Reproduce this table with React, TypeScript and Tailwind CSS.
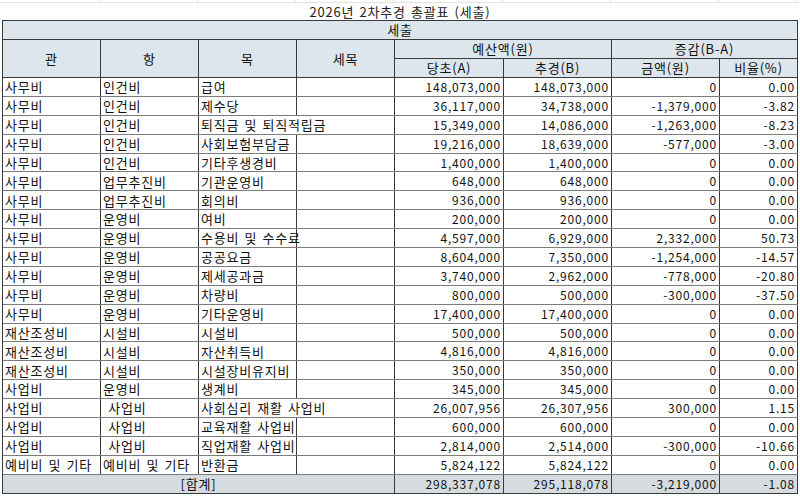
const rows: [string, string, string, string, string, string, string][] = [
  ['사무비', '인건비', '급여', '148,073,000', '148,073,000', '0', '0.00'],
  ['사무비', '인건비', '제수당', '36,117,000', '34,738,000', '-1,379,000', '-3.82'],
  ['사무비', '인건비', '퇴직금 및 퇴직적립금', '15,349,000', '14,086,000', '-1,263,000', '-8.23'],
  ['사무비', '인건비', '사회보험부담금', '19,216,000', '18,639,000', '-577,000', '-3.00'],
  ['사무비', '인건비', '기타후생경비', '1,400,000', '1,400,000', '0', '0.00'],
  ['사무비', '업무추진비', '기관운영비', '648,000', '648,000', '0', '0.00'],
  ['사무비', '업무추진비', '회의비', '936,000', '936,000', '0', '0.00'],
  ['사무비', '운영비', '여비', '200,000', '200,000', '0', '0.00'],
  ['사무비', '운영비', '수용비 및 수수료', '4,597,000', '6,929,000', '2,332,000', '50.73'],
  ['사무비', '운영비', '공공요금', '8,604,000', '7,350,000', '-1,254,000', '-14.57'],
  ['사무비', '운영비', '제세공과금', '3,740,000', '2,962,000', '-778,000', '-20.80'],
  ['사무비', '운영비', '차량비', '800,000', '500,000', '-300,000', '-37.50'],
  ['사무비', '운영비', '기타운영비', '17,400,000', '17,400,000', '0', '0.00'],
  ['재산조성비', '시설비', '시설비', '500,000', '500,000', '0', '0.00'],
  ['재산조성비', '시설비', '자산취득비', '4,816,000', '4,816,000', '0', '0.00'],
  ['재산조성비', '시설비', '시설장비유지비', '350,000', '350,000', '0', '0.00'],
  ['사업비', '운영비', '생계비', '345,000', '345,000', '0', '0.00'],
  ['사업비', ' 사업비', '사회심리 재활 사업비', '26,007,956', '26,307,956', '300,000', '1.15'],
  ['사업비', ' 사업비', '교육재활 사업비', '600,000', '600,000', '0', '0.00'],
  ['사업비', ' 사업비', '직업재활 사업비', '2,814,000', '2,514,000', '-300,000', '-10.66'],
  ['예비비 및 기타', '예비비 및 기타', '반환금', '5,824,122', '5,824,122', '0', '0.00'],
]

// hangul in the sheet is wider than Noto's, numbers are not
const cell = 'flex h-full shrink-0 items-center border-r border-[#3a3a3a] whitespace-pre'
const ko = 'text-[13px] tracking-[0.8px] [word-spacing:1.5px]'
const num = 'justify-end pr-[2px] text-[12px]'

export default function App() {
  return (
    <div className="h-[496px] w-[800px] overflow-hidden bg-white text-[#111] [font-family:'Noto_Sans_CJK_KR','Noto_Sans',sans-serif]">
      {/* sheet gridlines above the title */}
      <div className="flex h-[3px] border-b border-[#e3e3e3] pl-[2px]">
        {[98, 98, 98, 98, 109, 108, 108, 78].map((w, i) => (
          <div key={i} className="h-full border-r border-[#e3e3e3]" style={{ width: w }} />
        ))}
      </div>
      <div className={`flex h-[17px] items-center justify-center text-[#222] ${ko}`}>
        2026년 2차추경 총괄표 (세출)
      </div>

      <div className={`ml-[2px] w-[796px] border-t border-l border-[#3a3a3a] ${ko}`}>
        {/* 세출 */}
        <div className="flex h-[19px] items-center justify-center border-r border-b border-[#3a3a3a] bg-[#dce6ec]">
          세출
        </div>

        {/* column headers */}
        <div className="flex h-[38px] border-b border-[#3a3a3a] bg-[#dce6ec]">
          <div className={`${cell} w-[98px] justify-center`}>관</div>
          <div className={`${cell} w-[98px] justify-center`}>항</div>
          <div className={`${cell} w-[98px] justify-center`}>목</div>
          <div className={`${cell} w-[98px] justify-center`}>세목</div>
          <div className="flex w-[217px] shrink-0 flex-col border-r border-[#3a3a3a]">
            <div className="flex h-[19px] items-center justify-center border-b border-[#3a3a3a]">예산액(원)</div>
            <div className="flex h-[18px]">
              <div className={`${cell} w-[109px] justify-center`}>당초(A)</div>
              <div className="flex h-full w-[108px] items-center justify-center">추경(B)</div>
            </div>
          </div>
          <div className="flex w-[186px] shrink-0 flex-col border-r border-[#3a3a3a]">
            <div className="flex h-[19px] items-center justify-center border-b border-[#3a3a3a]">증감(B-A)</div>
            <div className="flex h-[18px]">
              <div className={`${cell} w-[108px] justify-center`}>금액(원)</div>
              <div className="flex h-full w-[78px] items-center justify-center">비율(%)</div>
            </div>
          </div>
        </div>

        {/* data rows */}
        {rows.map((r, i) => {
          // long 목 names spill over the empty 세목 cell, as in the sheet
          const spill = r[2].length > 10
          return (
            <div key={i} className="flex h-[18.9px] border-b border-[#7c7c7c]">
              <div className={`${cell} w-[98px] pl-[2px]`}>{r[0]}</div>
              <div className={`${cell} w-[98px] pl-[2px]`}>{r[1]}</div>
              <div className={`${cell} w-[98px] pl-[2px] ${spill ? 'border-r-transparent' : ''}`}>{r[2]}</div>
              <div className={`${cell} w-[98px]`} />
              <div className={`${cell} w-[109px] ${num}`}>{r[3]}</div>
              <div className={`${cell} w-[108px] ${num}`}>{r[4]}</div>
              <div className={`${cell} w-[108px] ${num}`}>{r[5]}</div>
              <div className={`${cell} w-[78px] ${num}`}>{r[6]}</div>
            </div>
          )
        })}

        {/* total */}
        <div className="flex h-[19px] border-b border-[#3a3a3a] bg-[#d5dbde]">
          <div className={`${cell} w-[392px] justify-center`}>[합계]</div>
          <div className={`${cell} w-[109px] ${num}`}>298,337,078</div>
          <div className={`${cell} w-[108px] ${num}`}>295,118,078</div>
          <div className={`${cell} w-[108px] ${num}`}>-3,219,000</div>
          <div className={`${cell} w-[78px] ${num}`}>-1.08</div>
        </div>
      </div>
    </div>
  )
}
